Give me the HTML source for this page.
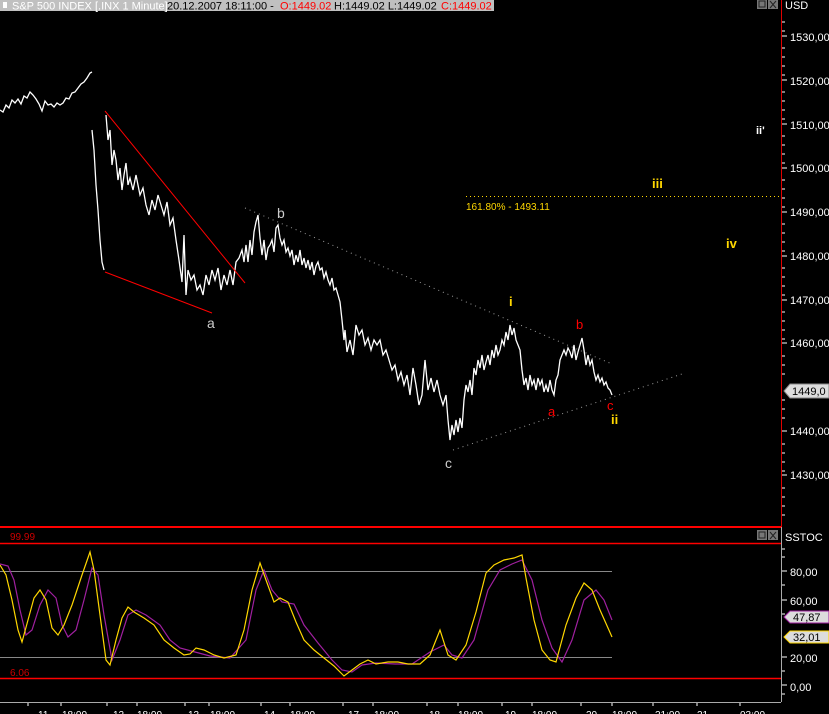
<!DOCTYPE html>
<html><head><meta charset="utf-8"><style>
html,body{margin:0;padding:0;background:#000;width:829px;height:714px;overflow:hidden}
svg{display:block}
text{font-family:"Liberation Sans",sans-serif}
</style></head><body>
<svg width="829" height="714" viewBox="0 0 829 714" xmlns="http://www.w3.org/2000/svg">
<rect width="829" height="714" fill="#000"/>
<!-- header -->
<rect x="0" y="0" width="494" height="11" fill="#c0c0c0"/>
<rect x="3" y="2" width="4" height="6" fill="#fff"/>
<text x="12" y="9.5" font-size="11" fill="#fff">S&amp;P 500 INDEX [.INX  1 Minute]</text>
<text x="167" y="9.5" font-size="11" fill="#000">20.12.2007 18:11:00 -</text>
<text x="280" y="9.5" font-size="11" fill="#f00">O:1449.02</text>
<text x="334" y="9.5" font-size="11" fill="#000">H:1449.02 L:1449.02</text>
<text x="441" y="9.5" font-size="11" fill="#f00">C:1449.02</text>
<!-- window buttons -->
<rect x="757" y="0" width="10" height="9" fill="#777"/><rect x="759" y="1" width="6" height="6" fill="none" stroke="#222"/>
<rect x="768" y="0" width="10" height="9" fill="#777"/><path d="M770 1 L776 8 M776 1 L770 8" stroke="#222"/>
<rect x="757" y="530" width="10" height="10" fill="#777"/><rect x="759" y="532" width="6" height="6" fill="none" stroke="#222"/>
<rect x="768" y="530" width="10" height="10" fill="#777"/><path d="M770 532 L776 539 M776 532 L770 539" stroke="#222"/>
<!-- axis line -->
<line x1="781.5" y1="0" x2="781.5" y2="527" stroke="#e00000"/>
<line x1="781.5" y1="527" x2="781.5" y2="702" stroke="#aaa"/>
<line x1="0" y1="702.5" x2="781" y2="702.5" stroke="#aaa"/>
<g fill="#fff" font-size="11">
<text x="785" y="9">USD</text>
<text x="790" y="41">1530,00</text>
<text x="790" y="85">1520,00</text>
<text x="790" y="129">1510,00</text>
<text x="790" y="172">1500,00</text>
<text x="790" y="216">1490,00</text>
<text x="790" y="260">1480,00</text>
<text x="790" y="304">1470,00</text>
<text x="790" y="347">1460,00</text>
<text x="790" y="435">1440,00</text>
<text x="790" y="479">1430,00</text>
<text x="785" y="541">SSTOC</text>
<text x="790" y="576">80,00</text>
<text x="790" y="605">60,00</text>
<text x="790" y="662">20,00</text>
<text x="790" y="691">0,00</text>
</g>
<g stroke="#fff">
<path d="M782 22h3M782 31h3M782 48h3M782 57h3M782 66h3M782 75h3M782 92h3M782 101h3M782 110h3M782 119h3M782 136h3M782 145h3M782 154h3M782 163h3M782 180h3M782 189h3M782 198h3M782 207h3M782 224h3M782 233h3M782 242h3M782 251h3M782 268h3M782 277h3M782 286h3M782 295h3M782 312h3M782 321h3M782 330h3M782 339h3M782 356h3M782 365h3M782 374h3M782 400h3M782 409h3M782 418h3M782 444h3M782 453h3M782 462h3M782 471h3M782 488h3M782 497h3M782 506h3M782 515h3"/>
<path d="M782 36h5M782 80h5M782 124h5M782 168h5M782 212h5M782 256h5M782 300h5M782 343h5M782 431h5M782 475h5"/>
<path d="M782 549h3M782 557h3M782 571h5M782 585h3M782 600h5M782 614h3M782 657h5M782 671h3M782 685h5M782 694h3"/>
</g>
<!-- price label -->
<path d="M784 391 L790 384 H829 V398 H790 Z" fill="#ddd" stroke="#888"/>
<text x="792" y="395" font-size="11" fill="#000">1449,0</text>
<!-- price data -->
<g fill="none" stroke="#fff" stroke-width="1.3">
<polyline points="0,110 3,112 6,105 9,108 12,100 15,103 18,99 21,104 24,96 27,98 30,92 33,95 36,99 39,104 42,111 45,101 48,105 51,104 54,107 57,103 60,105 63,103 66,98 69,99 72,93 75,92 78,88 81,84 84,82 87,78 90,73 92,72"/>
<polyline points="92,130 94,150 96,185 98,210 100,240 102,262 104,270"/>
<polyline points="106,115 108,140 110,130 112,165 114,150 116,160 118,180 120,168 122,190 124,175 126,163 128,185 130,178 133,190 136,175 140,195 143,188 146,205 149,215 152,200 155,210 158,195 161,205 164,215 167,202 170,225 173,218 176,240 179,260 182,282 184,235 186,295 188,270 191,280 194,275 197,290 200,285 203,295 206,275 209,285 212,270 215,280 218,268 221,290 224,275 227,285 230,270 233,285 236,262 239,258 242,250 244,262 246,245 248,262 250,240 252,255 254,232 256,222 258,215 260,238 262,255 264,240 266,260 268,248 270,245 272,240 274,252 276,228 278,225 280,238 282,245 284,240 286,252 288,248 290,256 292,250 294,265 296,255 298,262 300,250 302,265 304,258 306,268 308,260 310,270 312,262 314,275 316,266 318,262 320,270 322,268 324,278 326,272 328,280 330,285 332,278 334,290 336,288 338,295 340,302 342,320 344,340 345,330 347,352 350,340 353,355 356,325 359,335 362,330 365,345 368,338 371,350 374,340 377,345 380,340 383,355 386,350 389,360 392,370 395,365 398,380 401,372 404,385 407,375 410,395 413,368 416,385 419,405 422,395 425,360 428,390 431,378 434,392 437,380 440,395 443,405 446,395 448,420 450,440 452,425 454,435 456,420 458,432 460,418 462,428 464,400 466,385 468,392 470,380 472,395 474,368 476,375 478,360 480,368 482,355 484,370 486,362 488,355 490,365 492,350 494,358 496,345 498,355 500,350 502,340 504,345 506,332 508,340 510,325 512,335 514,328 516,340 518,345 520,350 522,370 524,385 526,378 528,390 530,375 532,385 534,380 536,390 538,378 540,385 542,380 544,392 546,385 548,392 550,380 552,390 554,395 556,380 558,375 560,360 562,355 564,350 566,355 568,348 570,352 572,358 574,345 576,360 578,352 580,345 582,338 584,350 586,365 588,355 590,365 592,360 594,372 596,380 598,375 600,382 602,378 604,385 606,382 608,388 610,390 612,395"/>
</g>
<!-- red lines -->
<line x1="105" y1="111" x2="245" y2="283" stroke="#f00"/>
<line x1="105" y1="272" x2="212" y2="313" stroke="#f00"/>
<!-- dotted lines -->
<line x1="245" y1="208" x2="612" y2="364" stroke="#999" stroke-dasharray="1,4"/>
<line x1="453" y1="450" x2="685" y2="373" stroke="#999" stroke-dasharray="1,4"/>
<line x1="466" y1="196.5" x2="781" y2="196.5" stroke="#ffd700" stroke-dasharray="1,3"/>
<text x="466" y="210" font-size="10" fill="#ffd700">161.80% - 1493.11</text>
<!-- labels -->
<g font-size="14">
<text x="207" y="328" fill="#ccc">a</text>
<text x="277" y="218" fill="#ccc">b</text>
<text x="445" y="468" fill="#ccc">c</text>
<text x="509" y="306" fill="#ffd700" font-weight="bold" font-size="13">i</text>
<text x="576" y="329" fill="#f00" font-size="13">b</text>
<text x="548" y="416" fill="#f00" font-size="13">a</text>
<text x="607" y="410" fill="#f00" font-size="13">c</text>
<text x="611" y="424" fill="#ffd700" font-weight="bold" font-size="13">ii</text>
<text x="652" y="188" fill="#ffd700" font-weight="bold" font-size="13">iii</text>
<text x="726" y="248" fill="#ffd700" font-weight="bold" font-size="13">iv</text>
<text x="756" y="134" fill="#fff" font-weight="bold" font-size="11">ii'</text>
</g>
<!-- stoch panel -->
<line x1="0" y1="527" x2="781" y2="527" stroke="#f00" stroke-width="2"/>
<line x1="0" y1="543.5" x2="781" y2="543.5" stroke="#f00" stroke-width="1.5"/>
<line x1="0" y1="678.5" x2="781" y2="678.5" stroke="#f00" stroke-width="1.5"/>
<text x="10" y="540" font-size="10" fill="#c00">99.99</text>
<text x="10" y="676" font-size="10" fill="#c00">6.06</text>
<line x1="0" y1="571.5" x2="612" y2="571.5" stroke="#888"/>
<line x1="0" y1="657.5" x2="612" y2="657.5" stroke="#888"/>
<polyline fill="none" stroke="#a020a0" stroke-width="1.2" points="0,564 8,566 14,580 20,610 26,635 32,630 40,605 48,590 56,598 62,625 68,637 76,630 84,600 92,568 98,575 104,615 112,660 120,640 128,615 136,610 146,615 160,625 170,640 180,648 195,652 210,656 230,658 246,640 256,590 264,570 272,590 282,602 294,604 304,625 318,643 332,660 342,670 352,672 362,665 376,663 395,664 412,664 430,652 444,645 452,655 462,658 474,640 488,590 500,570 512,564 522,560 532,580 542,620 552,648 562,662 572,640 584,600 596,590 604,600 612,620"/>
<polyline fill="none" stroke="#ffd700" stroke-width="1.2" points="0,565 6,575 12,600 18,630 22,642 28,620 34,598 40,590 46,600 52,628 58,635 64,625 72,605 82,575 90,552 94,570 100,615 106,660 110,665 116,640 122,618 128,607 134,612 144,618 154,625 164,640 174,648 184,655 190,654 196,648 204,650 214,655 224,658 236,655 244,630 252,590 260,563 266,580 274,602 280,598 288,602 296,622 304,640 314,650 324,658 334,666 344,676 352,670 360,664 368,660 376,664 388,662 398,662 408,664 420,664 430,655 440,630 448,655 456,660 466,645 476,612 486,573 494,565 504,560 514,558 522,555 526,578 534,620 542,650 550,660 556,662 566,625 576,598 584,583 592,590 600,610 608,628 612,637"/>
<path d="M784 617 L790 611 H829 V623 H790 Z" fill="#ddd" stroke="#a020a0"/>
<text x="793" y="621" font-size="11" fill="#000">47,87</text>
<path d="M784 637 L790 631 H829 V643 H790 Z" fill="#ddd" stroke="#ffd700"/>
<text x="793" y="641" font-size="11" fill="#000">32,01</text>
<!-- time axis -->
<g stroke="#fff">
<path d="M28 703v3M61 703v3M107 703v3M137 703v3M185 703v3M209 703v3M261 703v3M290 703v3M343 703v3M373 703v3M427 703v3M458 703v3M502 703v3M532 703v3M581 703v3M612 703v3M653 703v3M697 703v3M740 703v3"/>
</g>
<g font-size="10" fill="#fff">
<text x="38" y="718">11</text><text x="62" y="718">18:00</text>
<text x="113" y="718">12</text><text x="137" y="718">18:00</text>
<text x="188" y="718">13</text><text x="210" y="718">18:00</text>
<text x="264" y="718">14</text><text x="290" y="718">18:00</text>
<text x="348" y="718">17</text><text x="374" y="718">18:00</text>
<text x="429" y="718">18</text><text x="458" y="718">18:00</text>
<text x="505" y="718">19</text><text x="532" y="718">18:00</text>
<text x="586" y="718">20</text><text x="612" y="718">18:00</text>
<text x="655" y="718">21:00</text><text x="697" y="718">21</text><text x="740" y="718">03:00</text>
</g>
</svg>
</body></html>
